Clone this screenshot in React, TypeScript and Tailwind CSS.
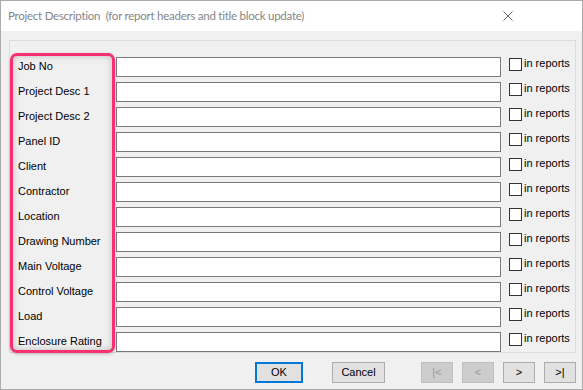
import React from "react";

const fields = [
  "Job No",
  "Project Desc 1",
  "Project Desc 2",
  "Panel ID",
  "Client",
  "Contractor",
  "Location",
  "Drawing Number",
  "Main Voltage",
  "Control Voltage",
  "Load",
  "Enclosure Rating",
];

const App = () => {
  return (
    <div className="w-[583px] h-[390px] border border-[#ababab] bg-[#f0f0f0] flex flex-col font-['Liberation_Sans',Arial,sans-serif] text-[11px] text-black">
      {/* Title bar */}
      <div className="h-[30px] bg-white flex items-start shrink-0">
        <span className="ml-[7px] mt-[7px] text-[11.5px] tracking-[-0.25px] leading-[16px] text-[#858585] font-['Lato',sans-serif] whitespace-pre">
          Project Description  (for report headers and title block update)
        </span>
        <svg className="ml-auto mr-[69px] mt-[10px]" width="10" height="10" viewBox="0 0 10 10">
          <path d="M0.5 0.5 L9.5 9.5 M9.5 0.5 L0.5 9.5" stroke="#6b6b6b" strokeWidth="1" />
        </svg>
      </div>

      {/* Body */}
      <div className="pl-[8px] pt-[9px]">
        <div className="relative w-[567px] h-[313px] border border-[#dcdcdc] pt-[14px] pl-[8px]">
          {fields.map((f) => (
            <div key={f} className="flex items-start h-[25px]">
              <span className="w-[98px] mt-[5px] leading-[13px]">{f}</span>
              <div className="w-[385px] h-[20px] mt-[2px] bg-white border border-[#7a7a7a]" />
              <div className="ml-[8px] mt-[3px] w-[13px] h-[13px] bg-white border border-[#333333]" />
              <span className="ml-[2px] mt-[2px] leading-[13px]">in reports</span>
            </div>
          ))}

          {/* highlight annotation */}
          <div className="absolute left-0 top-[12px] w-[105px] h-[300px] rounded-[7px] border-[3px] border-[#f8306f] shadow-[inset_0_0_6px_rgba(0,0,0,0.22),0_1px_3px_rgba(0,0,0,0.25)]" />
        </div>

        {/* Buttons */}
        <div className="flex mt-[9px] ml-[246px]">
          <button className="w-[48px] h-[21px] bg-[#e1e1e1] border-2 border-[#0078d7] leading-[15px]">OK</button>
          <button className="ml-[29px] w-[53px] h-[21px] bg-[#e1e1e1] border border-[#adadad] leading-[17px]">Cancel</button>
          <div className="ml-[36px] flex gap-[9px]">
            <button className="w-[32px] h-[21px] bg-[#cccccc] border border-[#bfbfbf] text-[#9a9a9a] leading-[17px]">|&lt;</button>
            <button className="w-[32px] h-[21px] bg-[#cccccc] border border-[#bfbfbf] text-[#9a9a9a] leading-[17px]">&lt;</button>
            <button className="w-[32px] h-[21px] bg-[#e1e1e1] border border-[#adadad] leading-[17px]">&gt;</button>
            <button className="w-[32px] h-[21px] bg-[#e1e1e1] border border-[#adadad] leading-[17px]">&gt;|</button>
          </div>
        </div>
      </div>
    </div>
  );
};

export default App;
